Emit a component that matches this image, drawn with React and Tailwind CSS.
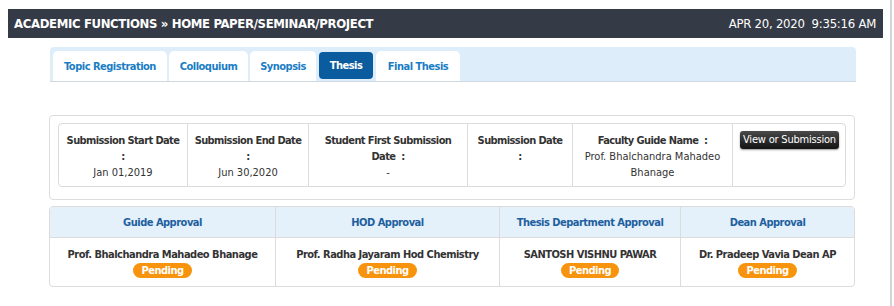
import React from "react";

const tabs = [
  { t: "Topic Registration", w: "w-[114px]", ml: "ml-0" },
  { t: "Colloquium", w: "w-[79px]", ml: "ml-[2px]" },
  { t: "Synopsis", w: "w-[66px]", ml: "ml-[2px]" },
  { t: "Thesis", w: "w-[54px]", ml: "ml-[3px]" },
  { t: "Final Thesis", w: "w-[84px]", ml: "ml-[3px]" },
];

const infoCols = [
  { w: "w-[129px]", head: ["Submission Start Date", ":"], value: "Jan 01,2019" },
  { w: "w-[121px]", head: ["Submission End Date", ":"], value: "Jun 30,2020" },
  { w: "w-[159px]", head: ["Student First Submission", "Date\u00a0 :"], value: "-" },
  { w: "w-[105px]", head: ["Submission Date", ":"], value: "" },
];

const approvals = [
  { w: "w-[226px]", title: "Guide Approval", name: "Prof. Bhalchandra Mahadeo Bhanage" },
  { w: "w-[224px]", title: "HOD Approval", name: "Prof. Radha Jayaram Hod Chemistry" },
  { w: "w-[181px]", title: "Thesis Department Approval", name: "SANTOSH VISHNU PAWAR" },
  { w: "flex-1", title: "Dean Approval", name: "Dr. Pradeep Vavia Dean AP" },
];

export default function App() {
  return (
    <div
      className="flex h-[306px] w-[894px] overflow-hidden bg-white text-[11px] text-[#333]"
      style={{ fontFamily: '"DejaVu Sans Condensed", "DejaVu Sans", Verdana, sans-serif' }}
    >
      <div className="w-[892px] border-r-2 border-[#d4d4d4] pl-[8px] pr-[7px]">
        {/* title bar */}
        <div className="mt-[9px] flex h-[29px] items-center justify-between bg-[#343a46] pl-[6px] pr-[7px] pt-[1px] text-[13px] text-white">
          <span className="font-bold tracking-[-0.35px]">ACADEMIC FUNCTIONS » HOME PAPER/SEMINAR/PROJECT</span>
          <span className="tracking-[-0.25px]">APR 20, 2020&nbsp; 9:35:16 AM</span>
        </div>

        {/* tabs */}
        <div className="ml-[42px] mt-[9px] flex h-[35px] w-[806px] items-end rounded-t-[4px] border-b border-[#cfd8e0] bg-[#deedfa] pl-[3px]">
          {tabs.map(({ t, w, ml }) =>
            t === "Thesis" ? (
              <div key={t} className={`${w} ${ml} mb-[2px] flex h-[27px] items-center justify-center rounded-[4px] bg-[#0b5c9e] pt-[1px] font-bold tracking-[-0.5px] text-white`}>
                {t}
              </div>
            ) : (
              <div key={t} className={`${w} ${ml} flex h-[30px] items-center justify-center rounded-t-[5px] bg-white pt-[2px] font-bold tracking-[-0.5px] text-[#1a7dc4]`}>
                {t}
              </div>
            )
          )}
        </div>

        {/* submission info */}
        <div className="ml-[41px] mt-[33px] w-[806px] rounded-[4px] border border-[#dcdcdc] px-[8px] pt-[7px] pb-[12px]">
          <div className="flex h-[64px] rounded-[4px] border border-[#dcdcdc]">
            {infoCols.map((c, i) => (
              <div key={i} className={`${c.w} border-r border-[#dcdcdc] pt-[9px] text-center leading-[16px]`}>
                {c.head.map((h, j) => (
                  <div key={j} className="font-bold tracking-[-0.6px]">{h}</div>
                ))}
                <div>{c.value}</div>
              </div>
            ))}
            <div className="w-[160px] border-r border-[#dcdcdc] pt-[9px] text-center leading-[16px]">
              <div className="font-bold tracking-[-0.6px]">Faculty Guide Name&nbsp; :</div>
              <div>Prof. Bhalchandra Mahadeo</div>
              <div>Bhanage</div>
            </div>
            <div className="flex-1 pl-[7px] pt-[7px]">
              <button className="flex h-[18px] w-[99px] items-center justify-center rounded-[3px] bg-gradient-to-b from-[#4a4a4a] to-[#141414] tracking-[-0.2px] text-white shadow-[0_1px_2px_rgba(0,0,0,0.4)]">
                View or Submission
              </button>
            </div>
          </div>
        </div>

        {/* approvals */}
        <div className="ml-[41px] mt-[6px] w-[806px] overflow-hidden rounded-[4px] border border-[#dcdcdc]">
          <div className="flex h-[31px] bg-[#e4f0fa]">
            {approvals.map((a, i) => (
              <div
                key={i}
                className={`${a.w} flex items-center justify-center border-b border-[#dcdcdc] pt-[2px] font-bold tracking-[-0.5px] text-[#1d60a0] ${i < 3 ? "border-r" : ""}`}
              >
                {a.title}
              </div>
            ))}
          </div>
          <div className="flex h-[48px]">
            {approvals.map((a, i) => (
              <div
                key={i}
                className={`${a.w} flex flex-col items-center border-[#dcdcdc] pt-[9px] font-bold tracking-[-0.5px] ${i < 3 ? "border-r" : ""}`}
              >
                <div className="leading-[16px]">{a.name}</div>
                <span className="rounded-full bg-[#f7930c] px-[8px] leading-[15px] text-white">Pending</span>
              </div>
            ))}
          </div>
        </div>
      </div>
    </div>
  );
}
